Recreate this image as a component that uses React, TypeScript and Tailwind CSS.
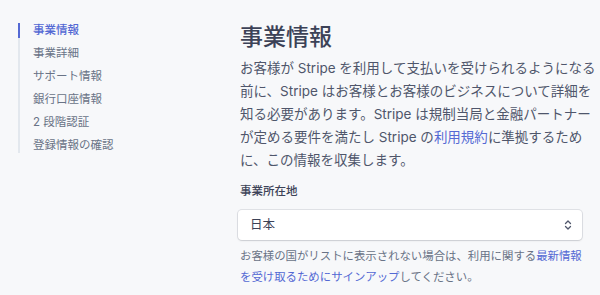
import React from "react";

const navItems = [
  "事業情報",
  "事業詳細",
  "サポート情報",
  "銀行口座情報",
  "2 段階認証",
  "登録情報の確認",
];

const font = {
  fontFamily: '"Inter", "Noto Sans CJK JP", sans-serif',
};

export default function App() {
  return (
    <div
      className="flex h-[295px] w-[600px] overflow-hidden bg-[#f7f8fa] antialiased"
      style={font}
    >
      <aside className="w-[240px] shrink-0 pl-[18px] pt-[23px]">
        <nav className="flex flex-col gap-[8px] border-l-2 border-[#e3e8ee]">
          {navItems.map((item, i) => (
            <div
              key={item}
              className={
                i === 0
                  ? "-ml-[2px] border-l-2 border-[#5469d4] pl-[13px] text-[11.5px] leading-[15px] font-medium text-[#5469d4]"
                  : "-ml-[2px] border-l-2 border-transparent pl-[13px] text-[11.5px] leading-[15px] text-[#697386]"
              }
            >
              {item}
            </div>
          ))}
        </nav>
      </aside>

      <main className="w-[350px] pt-[22px]">
        <h1 className="text-[23px] leading-[30px] font-medium text-[#3c4257]">
          事業情報
        </h1>
        <p className="mt-[5px] whitespace-nowrap text-[13.5px] leading-[23px] text-[#4f566b]">
          お客様が Stripe を利用して支払いを受けられるようになる
          <br />
          前に、Stripe はお客様とお客様のビジネスについて詳細を
          <br />
          知る必要があります。Stripe は規制当局と金融パートナー
          <br />
          が定める要件を満たし Stripe の
          <span className="text-[#5469d4]">利用規約</span>
          に準拠するため
          <br />
          に、この情報を収集します。
        </p>

        <div className="mt-[11px] text-[11.5px] leading-[16px] font-medium text-[#3c4257]">
          事業所在地
        </div>
        <div className="mt-[11px] flex h-[30px] w-[344px] -ml-[2px] items-center justify-between rounded-[4px] bg-white pl-[12px] pr-[8px] shadow-[0_0_0_1px_rgba(60,66,87,0.12),0_1px_2px_rgba(0,0,0,0.1)]">
          <span className="text-[12.5px] text-[#3c4257]">日本</span>
          <svg width="12" height="12" viewBox="0 0 12 12" fill="none">
            <path
              d="M3.5 4.5 6 2l2.5 2.5M3.5 7.5 6 10l2.5-2.5"
              stroke="#4f566b"
              strokeWidth="1.3"
              strokeLinecap="round"
              strokeLinejoin="round"
            />
          </svg>
        </div>

        <p className="mt-[6px] whitespace-nowrap text-[11.4px] leading-[21px] text-[#697386]">
          お客様の国がリストに表示されない場合は、利用に関する
          <span className="text-[#5469d4]">
            最新情報
            <br />
            を受け取るためにサインアップ
          </span>
          してください。
        </p>
      </main>
    </div>
  );
}
